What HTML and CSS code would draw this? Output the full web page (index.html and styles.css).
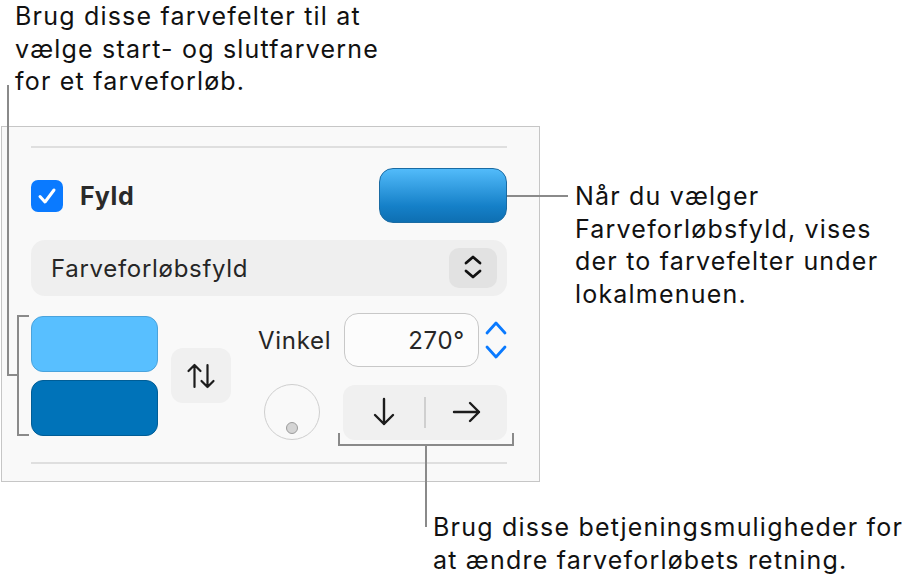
FILE: index.html
```html
<!DOCTYPE html>
<html lang="da">
<head>
    <meta charset="UTF-8">
    <meta name="viewport" content="width=device-width, initial-scale=1.0">
    <title>Farveforløbsfyld</title>
    <link rel="stylesheet" href="styles.css">
</head>
<body>
    <div class="figure">
        <p class="note note-top">Brug disse farvefelter til at<br>vælge start- og slutfarverne<br>for et farveforløb.</p>

        <div class="row">
            <div class="panel">
                <div class="sep"></div>

                <div class="fill-row">
                    <span class="checkbox">
                        <svg width="32" height="32" viewBox="0 0 32 32"><path d="M9 16.5l5 5.5 9-12" fill="none" stroke="#fff" stroke-width="3" stroke-linecap="round" stroke-linejoin="round"/></svg>
                    </span>
                    <span class="fill-label">Fyld</span>
                    <span class="well"></span>
                </div>

                <div class="popup">
                    <span class="popup-text">Farveforløbsfyld</span>
                    <span class="popup-btn">
                        <svg width="20" height="30" viewBox="0 0 20 30"><path d="M3 10l7-6 7 6M3 18l7 6 7-6" fill="none" stroke="#111" stroke-width="2.8" stroke-linecap="round" stroke-linejoin="round"/></svg>
                    </span>
                </div>

                <div class="gradient">
                    <div class="swatches">
                        <span class="swatch swatch-start"></span>
                        <span class="swatch swatch-end"></span>
                    </div>
                    <span class="swap-btn">
                        <svg width="30" height="26" viewBox="0 0 30 26"><path d="M8.5 24V2M2.5 8l6-6 6 6M21.5 2v22M15.5 18l6 6 6-6" fill="none" stroke="#1c1c1c" stroke-width="2.2" stroke-linecap="round" stroke-linejoin="round"/></svg>
                    </span>
                    <div class="angle">
                        <span class="angle-label">Vinkel</span>
                        <div class="angle-input">
                            <span class="field">270°</span>
                            <span class="stepper">
                                <svg width="22" height="44" viewBox="0 0 22 44"><path d="M2 15l9-10 9 10M2 29l9 10 9-10" fill="none" stroke="#0a7aff" stroke-width="2.8" stroke-linecap="round" stroke-linejoin="round"/></svg>
                            </span>
                        </div>
                        <span class="dial"><span class="dial-dot"></span></span>
                        <div class="segment">
                            <span class="seg-item">
                                <svg width="24" height="30" viewBox="0 0 24 30"><path d="M12 2v25M3 18l9 9 9-9" fill="none" stroke="#1c1c1c" stroke-width="2.4" stroke-linecap="round" stroke-linejoin="round"/></svg>
                            </span>
                            <span class="seg-divider"></span>
                            <span class="seg-item">
                                <svg width="30" height="24" viewBox="0 0 30 24"><path d="M2 12h25M18 3l9 9-9 9" fill="none" stroke="#1c1c1c" stroke-width="2.4" stroke-linecap="round" stroke-linejoin="round"/></svg>
                            </span>
                        </div>
                    </div>
                </div>

                <div class="sep sep-bottom"></div>
            </div>

            <p class="note note-right">Når du vælger<br>Farveforløbsfyld, vises<br>der to farvefelter under<br>lokalmenuen.</p>
        </div>

        <p class="note note-bottom">Brug disse betjeningsmuligheder for<br>at ændre farveforløbets retning.</p>

        <!-- leader lines -->
        <span class="line line-left-v"></span>
        <span class="line line-left-tick"></span>
        <span class="bracket bracket-left"></span>
        <span class="line line-well"></span>
        <span class="bracket bracket-bottom"></span>
        <span class="line line-bottom-v"></span>
    </div>
</body>
</html>
```

FILE: styles.css
```css
* {
    box-sizing: border-box;
}
body {
    margin: 0;
    background: #fff;
    font-family: Inter, "Noto Sans", "Liberation Sans", sans-serif;
    color: #111;
}
.figure {
    position: relative;
    width: 918px;
    height: 587px;
    overflow: hidden;
}
.note {
    margin: 0;
    font-size: 25px;
    letter-spacing: 1.2px;
    line-height: 32.5px;
    color: #111;
}
.note-top {
    padding-left: 15px;
    height: 126px;
}
.row {
    display: flex;
    align-items: flex-start;
}
.note-right {
    margin-top: 54px;
    margin-left: 35px;
}
.note-bottom {
    margin-top: 29px;
    margin-left: 433px;
}

/* inspector panel */
.panel {
    margin-left: 1px;
    width: 539px;
    height: 356px;
    border: 1px solid #c6c6c6;
    background: #f9f9f9;
    padding: 19px 32px 0 29px;
    display: flex;
    flex-direction: column;
    color: #262626;
}
.sep {
    height: 2px;
    background: #dfdfdf;
}
.sep-bottom {
    margin-top: 22px;
}
.fill-row {
    display: flex;
    align-items: center;
    margin-top: 20px;
    height: 55px;
}
.checkbox {
    width: 32px;
    height: 32px;
    border-radius: 7px;
    background: #0a7aff;
    display: flex;
}
.fill-label {
    margin-left: 17px;
    font-size: 25px;
    letter-spacing: 0.8px;
    font-weight: 700;
    color: #2a2a2a;
}
.well {
    margin-left: auto;
    width: 128px;
    height: 55px;
    border-radius: 14px;
    background: linear-gradient(#52bbfa, #1580c8 70%, #0e6fb2);
    border: 1px solid #1a6ba3;
}
.popup {
    margin-top: 17px;
    height: 56px;
    border-radius: 14px;
    background: #efefef;
    display: flex;
    align-items: center;
    padding: 0 10px 0 20px;
}
.popup-text {
    font-size: 24px;
    letter-spacing: 0.7px;
    color: #262626;
}
.popup-btn {
    margin-left: auto;
    width: 48px;
    height: 40px;
    border-radius: 10px;
    background: #e2e2e2;
    display: flex;
    align-items: center;
    justify-content: center;
}
.gradient {
    margin-top: 17px;
    display: flex;
    align-items: flex-start;
    height: 127px;
}
.swatches {
    margin-top: 3px;
    display: flex;
    flex-direction: column;
    gap: 8px;
}
.swatch {
    width: 127px;
    height: 56px;
    border-radius: 12px;
}
.swatch-start {
    background: #58bfff;
    border: 1px solid #4aa3dc;
}
.swatch-end {
    background: #0073b9;
    border: 1px solid #005d96;
}
.swap-btn {
    margin-left: 13px;
    margin-top: 35px;
    width: 60px;
    height: 55px;
    border-radius: 12px;
    background: #f0f0f0;
    display: flex;
    align-items: center;
    justify-content: center;
}
.angle {
    margin-left: 27px;
    display: grid;
    grid-template-columns: 85px 164px;
    grid-template-rows: 54px 56px;
    row-gap: 17px;
    align-items: center;
}
.angle-label {
    font-size: 24px;
    letter-spacing: 0.7px;
    color: #262626;
}
.angle-input {
    display: flex;
    align-items: center;
    gap: 6px;
}
.field {
    margin-left: 1px;
    width: 135px;
    height: 54px;
    border: 1.5px solid #c8c8c8;
    border-radius: 14px;
    background: #fcfcfc;
    font-size: 24px;
    letter-spacing: 0.7px;
    color: #262626;
    display: flex;
    align-items: center;
    justify-content: flex-end;
    padding-right: 13px;
}
.stepper {
    display: flex;
}
.dial {
    margin-left: 6px;
    width: 56px;
    height: 56px;
    border-radius: 50%;
    border: 1.5px solid #cfcfcf;
    position: relative;
}
.dial-dot {
    position: absolute;
    left: 21px;
    top: 37px;
    width: 12px;
    height: 12px;
    border-radius: 50%;
    background: #d4d4d4;
    border: 1.5px solid #9c9c9c;
}
.segment {
    width: 164px;
    height: 55px;
    border-radius: 12px;
    background: #f0f0f0;
    display: flex;
    align-items: center;
}
.seg-item {
    flex: 1;
    display: flex;
    justify-content: center;
}
.seg-divider {
    width: 2px;
    height: 31px;
    background: #cfcfcf;
}

/* callout leaders */
.line {
    position: absolute;
    background: #8a8a8a;
}
.line-left-v {
    left: 7px;
    top: 85px;
    width: 2px;
    height: 291px;
}
.line-left-tick {
    left: 7px;
    top: 374px;
    width: 12px;
    height: 2px;
}
.bracket {
    position: absolute;
    border: 2px solid #8a8a8a;
}
.bracket-left {
    left: 17px;
    top: 315px;
    width: 12px;
    height: 121px;
    border-right: none;
}
.line-well {
    left: 507px;
    top: 195px;
    width: 61px;
    height: 2px;
}
.bracket-bottom {
    left: 338px;
    top: 433px;
    width: 176px;
    height: 13px;
    border-top: none;
}
.line-bottom-v {
    left: 425px;
    top: 445px;
    width: 2px;
    height: 82px;
}
```
